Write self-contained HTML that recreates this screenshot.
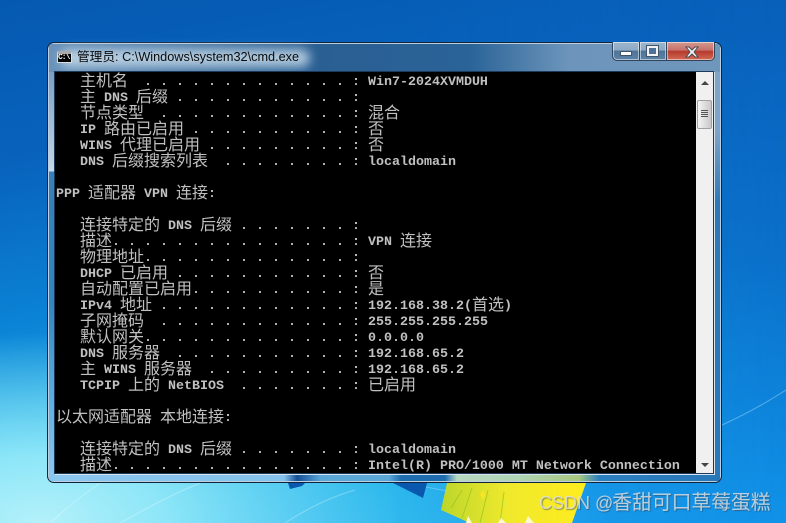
<!DOCTYPE html>
<html lang="zh"><head><meta charset="utf-8"><title>cmd</title>
<style>
html,body{margin:0;padding:0;width:786px;height:523px;overflow:hidden}
#d{position:absolute;left:0;top:0;width:786px;height:523px;overflow:hidden;
background:
radial-gradient(ellipse 360px 190px at 40px 523px,#b4f1fa 0%,#8de6f8 35%,rgba(100,215,245,0) 100%),
linear-gradient(170deg,#0559b0 0%,#0863bd 25%,#0b84d6 50%,#1fb4e8 72%,#3cbcf2 100%)}
#dr{position:absolute;left:0;top:0;width:786px;height:523px;background:linear-gradient(180deg,#0860ba 0,#0a70ca 50%,#1092e8 100%);-webkit-mask-image:linear-gradient(270deg,#000 0%,rgba(0,0,0,.85) 22%,transparent 50%);mask-image:linear-gradient(270deg,#000 0%,rgba(0,0,0,.85) 22%,transparent 50%)}
#win{position:absolute;left:47px;top:42px;width:673px;height:439px;border:1px solid #10243c;border-radius:7px;
background:#6f96bb;box-shadow:inset 0 0 0 1px rgba(255,255,255,.55);overflow:hidden}
#tg{position:absolute;left:1px;top:1px;width:671px;height:28px;background:linear-gradient(90deg,#6a93ba 0,#2a5f93 270px,#2a6398 420px,#6d95bb 520px,#6f96bb 671px)}
#sl{position:absolute;left:1px;top:29px;width:6px;height:409px;background:linear-gradient(180deg,#7a9fc4 0,#c0d4e4 94px,#c8dcea 99px,#3a7fb8 100px,#2f86c0 230px,#60aee0 330px,#8ccaf0 409px)}
#sr{position:absolute;left:666px;top:29px;width:6px;height:409px;background:linear-gradient(180deg,#7fa3c6 0,#7da3c8 60px,#2e79b5 130px,#2a78b8 409px)}
#sd{position:absolute;left:1px;top:431px;width:671px;height:7px;background:linear-gradient(90deg,#8ac6ee 0,#86c3ec 235px,#154f96 248px,#5aa7d8 272px,#5aa7d8 340px,#1d6db0 352px,#1d6db0 396px,#b8d8c0 408px,#b0d4b4 470px,#a8c880 530px,#2a7fc0 550px,#2878b8 671px)}
#tb{position:absolute;left:60px;top:49px;width:250px;height:18px;background:#c5d9e8;filter:blur(5px);opacity:.85;border-radius:9px}
#ti{position:absolute;left:77px;top:49px;font:12.7px/16px "Liberation Sans","WenQuanYi Zen Hei",sans-serif;color:#0b0b0b;white-space:pre}
#ic{position:absolute;left:57px;top:51px;width:15px;height:12px;background:#000;border:1px solid #ddd;border-top:3px solid #aaa;box-sizing:border-box;color:#fff;font:bold 8px/8px "Liberation Mono",monospace;overflow:hidden;letter-spacing:-1px}
.b{position:absolute;top:42px;height:18px;border:1px solid #31465c;border-top:0;box-sizing:content-box;box-shadow:inset 0 0 0 1px rgba(255,255,255,.5)}
#mn{left:612px;width:26px;border-radius:0 0 0 5px;background:linear-gradient(180deg,#9db6cd 0,#8eaac4 45%,#4e7398 50%,#5d83a8 100%)}
#mx{left:639px;width:26px;background:linear-gradient(180deg,#9db6cd 0,#8eaac4 45%,#4e7398 50%,#5d83a8 100%)}
#cl{left:666px;width:47px;border-radius:0 0 5px 0;background:linear-gradient(180deg,#d49a90 0,#c5716a 45%,#b53a2c 52%,#d36a55 100%)}
#c1{position:absolute;left:620px;top:51px;width:10px;height:3px;background:#fff;border:1px solid #41566d}
#c2{position:absolute;left:647px;top:46px;width:7px;height:6px;border:2px solid #f2f2f2;outline:1px solid #41566d;background:#4d7198}
#con{position:absolute;left:55px;top:72px;width:641px;height:401px;background:#000;overflow:hidden}
#in{position:absolute;left:1px;top:-3px;width:641px;height:410px}
#fr{position:absolute;left:54px;top:71px;width:660px;height:403px;border:1px solid #1e3a58;box-sizing:border-box;box-shadow:1px 1px 0 #d5e4ef}
#sb{position:absolute;left:696px;top:72px;width:17px;height:401px;background:#f0f0f0}
#th{position:absolute;left:697px;top:100px;width:13px;height:27px;border:1px solid #a0a0a0;border-radius:2px;background:linear-gradient(90deg,#f4f4f4,#dcdcdc 55%,#c8c8c8)}
.g{position:absolute;left:701px;width:7px;height:1px;background:#555}
#u{position:absolute;left:701px;top:81px;border-left:4px solid transparent;border-right:4px solid transparent;border-bottom:4px solid #444}
#v{position:absolute;left:701px;top:463px;border-left:4px solid transparent;border-right:4px solid transparent;border-top:4px solid #444}
.r{position:absolute;left:0;height:16px;white-space:pre;color:#c0c0c0;font:bold 13.33px/16px "Liberation Mono",monospace}
.r i{position:relative;top:1px;font:normal 16px/16px "WenQuanYi Zen Hei","Noto Sans CJK SC",sans-serif;color:#c0c0c0}
#wm{position:absolute;left:539px;top:491px;font:18px/24px "Liberation Sans","Noto Sans CJK SC",sans-serif;color:rgba(225,225,225,.8);text-shadow:1px 1px 1px rgba(50,70,90,.55);white-space:pre}
#wm span{font-size:19.8px;margin-left:-1px}
</style></head><body>
<div id="d">
<div id="dr"></div>
<svg width="786" height="523" style="position:absolute;left:0;top:0">
<defs><linearGradient id="y" x1="0" y1="0" x2="1" y2="0"><stop offset="0" stop-color="#bcd62c"/><stop offset=".45" stop-color="#efe92c"/><stop offset="1" stop-color="#ffec1e"/></linearGradient></defs>
<path d="M288 483 L290 489 L302 486 L305 483 Z M393 483 L423 498 L427 483 Z" fill="#0a58ae"/>
<path d="M447 483 L586 483 L572 523 L470 523 L441 510 Z" fill="url(#y)"/>
<path d="M451 508 L462 490 M462 518 L472 488 M480 523 L488 490 M500 523 L504 492" stroke="#92c428" stroke-width="1" fill="none" opacity=".7"/>
<path d="M466 523 L468 516 L472 523 Z M498 523 L501 518 L506 523 Z M525 523 L528 516 L534 523 Z" fill="#fffbd0"/>
<path d="M480 495 l3 -5 l3 5 l-3 5 Z" fill="#f8e420"/>
<path d="M50 523 Q75 500 100 483 M120 523 Q170 495 200 483 M285 523 Q320 500 355 490" stroke="#fff" stroke-width="1" fill="none" opacity=".3"/>
<path d="M722 425 Q755 410 786 390 M426 487 L447 491" stroke="#9ad8f4" stroke-width="1" fill="none" opacity=".5"/>
</svg>
<div id="win"><div id="tg"></div><div id="sl"></div><div id="sr"></div><div id="sd"></div></div>
<div id="tb"></div>
<div id="ic">C:\</div>
<div id="ti">管理员: C:\Windows\system32\cmd.exe</div>
<div class="b" id="mn"></div><div class="b" id="mx"></div><div class="b" id="cl"></div>
<div id="c1"></div><div id="c2"></div>
<svg width="18" height="14" style="position:absolute;left:683px;top:45px"><path d="M3 2 L6 2 L9 5 L12 2 L15 2 L11 7 L15 12 L12 12 L9 9 L6 12 L3 12 L7 7 Z" fill="#f4f4f4" stroke="#4a4a55" stroke-width="1"/></svg>
<div id="con"><div id="in">
<div class="r" style="top:1px">   <i>主机名</i>  . . . . . . . . . . . . . : Win7-2024XVMDUH</div>
<div class="r" style="top:17px">   <i>主</i> DNS <i>后缀</i> . . . . . . . . . . . :</div>
<div class="r" style="top:33px">   <i>节点类型</i>  . . . . . . . . . . . . : <i>混合</i></div>
<div class="r" style="top:49px">   IP <i>路由已启用</i> . . . . . . . . . . : <i>否</i></div>
<div class="r" style="top:65px">   WINS <i>代理已启用</i> . . . . . . . . . : <i>否</i></div>
<div class="r" style="top:81px">   DNS <i>后缀搜索列表</i>  . . . . . . . . : localdomain</div>
<div class="r" style="top:113px">PPP <i>适配器</i> VPN <i>连接</i>:</div>
<div class="r" style="top:145px">   <i>连接特定的</i> DNS <i>后缀</i> . . . . . . . :</div>
<div class="r" style="top:161px">   <i>描述</i>. . . . . . . . . . . . . . . : VPN <i>连接</i></div>
<div class="r" style="top:177px">   <i>物理地址</i>. . . . . . . . . . . . . :</div>
<div class="r" style="top:193px">   DHCP <i>已启用</i> . . . . . . . . . . . : <i>否</i></div>
<div class="r" style="top:209px">   <i>自动配置已启用</i>. . . . . . . . . . : <i>是</i></div>
<div class="r" style="top:225px">   IPv4 <i>地址</i> . . . . . . . . . . . . : 192.168.38.2(<i>首选</i>)</div>
<div class="r" style="top:241px">   <i>子网掩码</i>  . . . . . . . . . . . . : 255.255.255.255</div>
<div class="r" style="top:257px">   <i>默认网关</i>. . . . . . . . . . . . . : 0.0.0.0</div>
<div class="r" style="top:273px">   DNS <i>服务器</i>  . . . . . . . . . . . : 192.168.65.2</div>
<div class="r" style="top:289px">   <i>主</i> WINS <i>服务器</i>  . . . . . . . . . : 192.168.65.2</div>
<div class="r" style="top:305px">   TCPIP <i>上的</i> NetBIOS  . . . . . . . : <i>已启用</i></div>
<div class="r" style="top:337px"><i>以太网适配器</i> <i>本地连接</i>:</div>
<div class="r" style="top:369px">   <i>连接特定的</i> DNS <i>后缀</i> . . . . . . . : localdomain</div>
<div class="r" style="top:385px">   <i>描述</i>. . . . . . . . . . . . . . . : Intel(R) PRO/1000 MT Network Connection</div>
</div></div>
<div id="sb"></div><div id="fr"></div>
<div id="u"></div><div id="v"></div>
<div id="th"></div>
<div class="g" style="top:110px"></div><div class="g" style="top:112px"></div><div class="g" style="top:114px"></div><div class="g" style="top:116px"></div>
<div id="wm">CSDN @<span>香甜可口草莓蛋糕</span></div>
</div>
</body></html>
